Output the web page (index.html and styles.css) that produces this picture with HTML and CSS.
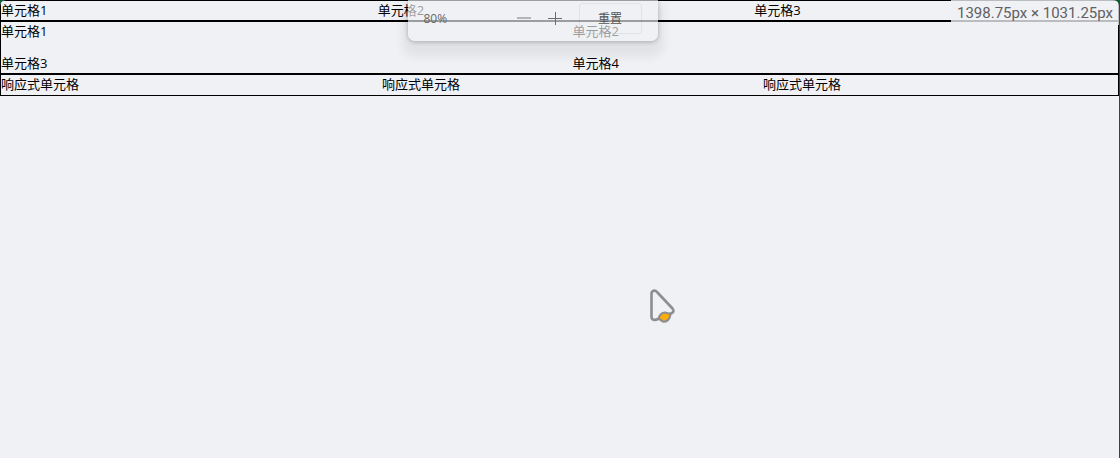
FILE: index.html
```html
<!DOCTYPE html>
<html lang="zh-CN">
<head>
<meta charset="utf-8">
<title>Grid</title>
<link rel="stylesheet" href="styles.css">
</head>
<body>
<div class="window">
  <main class="page">
    <section class="grid grid-fixed">
      <div>单元格1</div><div>单元格2</div><div>单元格3</div>
    </section>
    <section class="grid grid-gaps">
      <div>单元格1</div><div>单元格2</div><div>单元格3</div><div>单元格4</div>
    </section>
    <section class="grid grid-responsive">
      <div>响应式单元格</div><div>响应式单元格</div><div>响应式单元格</div>
    </section>
  </main>
  <div class="zoom-bar">
    <span class="zoom-level">80%</span>
    <button class="zoom-step" aria-label="缩小"><svg width="14" height="14" viewBox="0 0 14 14"><path d="M0 6H14" stroke="#b4b4b6" stroke-width="2"/></svg></button>
    <button class="zoom-step" aria-label="放大"><svg width="14" height="14" viewBox="0 0 14 14"><path d="M0 6.5H14M7.5 0V13" stroke="#6c6c6e"/></svg></button>
    <button class="zoom-reset">重置</button>
  </div>
  <output class="viewport-size">1398.75px × 1031.25px</output>
  <svg class="pointer" width="28" height="36" viewBox="0 0 28 36" aria-hidden="true">
    <path d="M2.500 6C2.500 2.500 6 1.500 8 4L23.500 20.500C25.500 23 24.500 24.500 22 25.500L9 31C6 32.500 2.500 32 2.500 29Z" fill="#f0f1f5" stroke="#8d8f8f" stroke-width="2.600" stroke-linejoin="round"/>
    <path d="M9.500 30.500C10.500 27 13 24.500 16 24.500L21.500 26C21 30.500 18.500 34.500 14 33.500Z" fill="#ffad08" stroke="#8d8f8f" stroke-width="2.200" stroke-linejoin="round"/>
  </svg>
</div>
</body>
</html>
```
FILE: styles.css
```css
* {
  box-sizing: border-box;
}

body {
  margin: 0;
  background: #115c35;
  color: #000;
  font-family: "Open Sans", "Noto Sans CJK SC", sans-serif;
  font-size: 13px;
  line-height: 19px;
}

.window {
  position: relative;
  min-height: 100vh;
  margin-right: 1px;
  overflow: hidden;
  border-radius: 6px 6px 0 0;
  background: #f0f1f5;
}

.grid {
  display: grid;
  border: 1px solid #000;
}

.grid-fixed {
  grid-template-columns: repeat(3, 1fr);
  gap: 13px;
}

.grid-gaps {
  grid-template-columns: repeat(2, 1fr);
  gap: 13px 26px;
}

.grid-responsive {
  grid-template-columns: repeat(auto-fit, minmax(240px, 1fr));
  gap: 26px;
  padding-bottom: 1px;
}

.zoom-bar {
  position: absolute;
  top: 0;
  left: 50%;
  display: flex;
  align-items: center;
  width: 250px;
  height: 41px;
  margin-left: -152px;
  padding: 0 16px 4px;
  border-radius: 0 0 7px 7px;
  background: rgba(240, 241, 245, 0.65);
  box-shadow: 0 1px 4px rgba(0, 0, 0, 0.25), 0 10px 10px 6px rgba(0, 0, 0, 0.06);
  color: #666;
  font-size: 12px;
}

.zoom-level {
  flex: 1;
}

.zoom-step {
  display: flex;
  margin-right: 17px;
  padding: 0;
  border: 0;
  background: none;
}

.zoom-reset {
  width: 63px;
  height: 31px;
  padding: 0;
  border: 1px solid rgba(0, 0, 0, 0.06);
  border-radius: 3px;
  background: none;
  color: #555;
  font: inherit;
}

.viewport-size {
  position: absolute;
  top: 0;
  right: 0;
  height: 25px;
  padding: 0 6px;
  background: rgba(240, 241, 245, 0.78);
  color: #606062;
  font-family: Roboto, "Open Sans", sans-serif;
  font-size: 15px;
  line-height: 26px;
}

.pointer {
  position: absolute;
  top: 288px;
  left: 649px;
}
```
